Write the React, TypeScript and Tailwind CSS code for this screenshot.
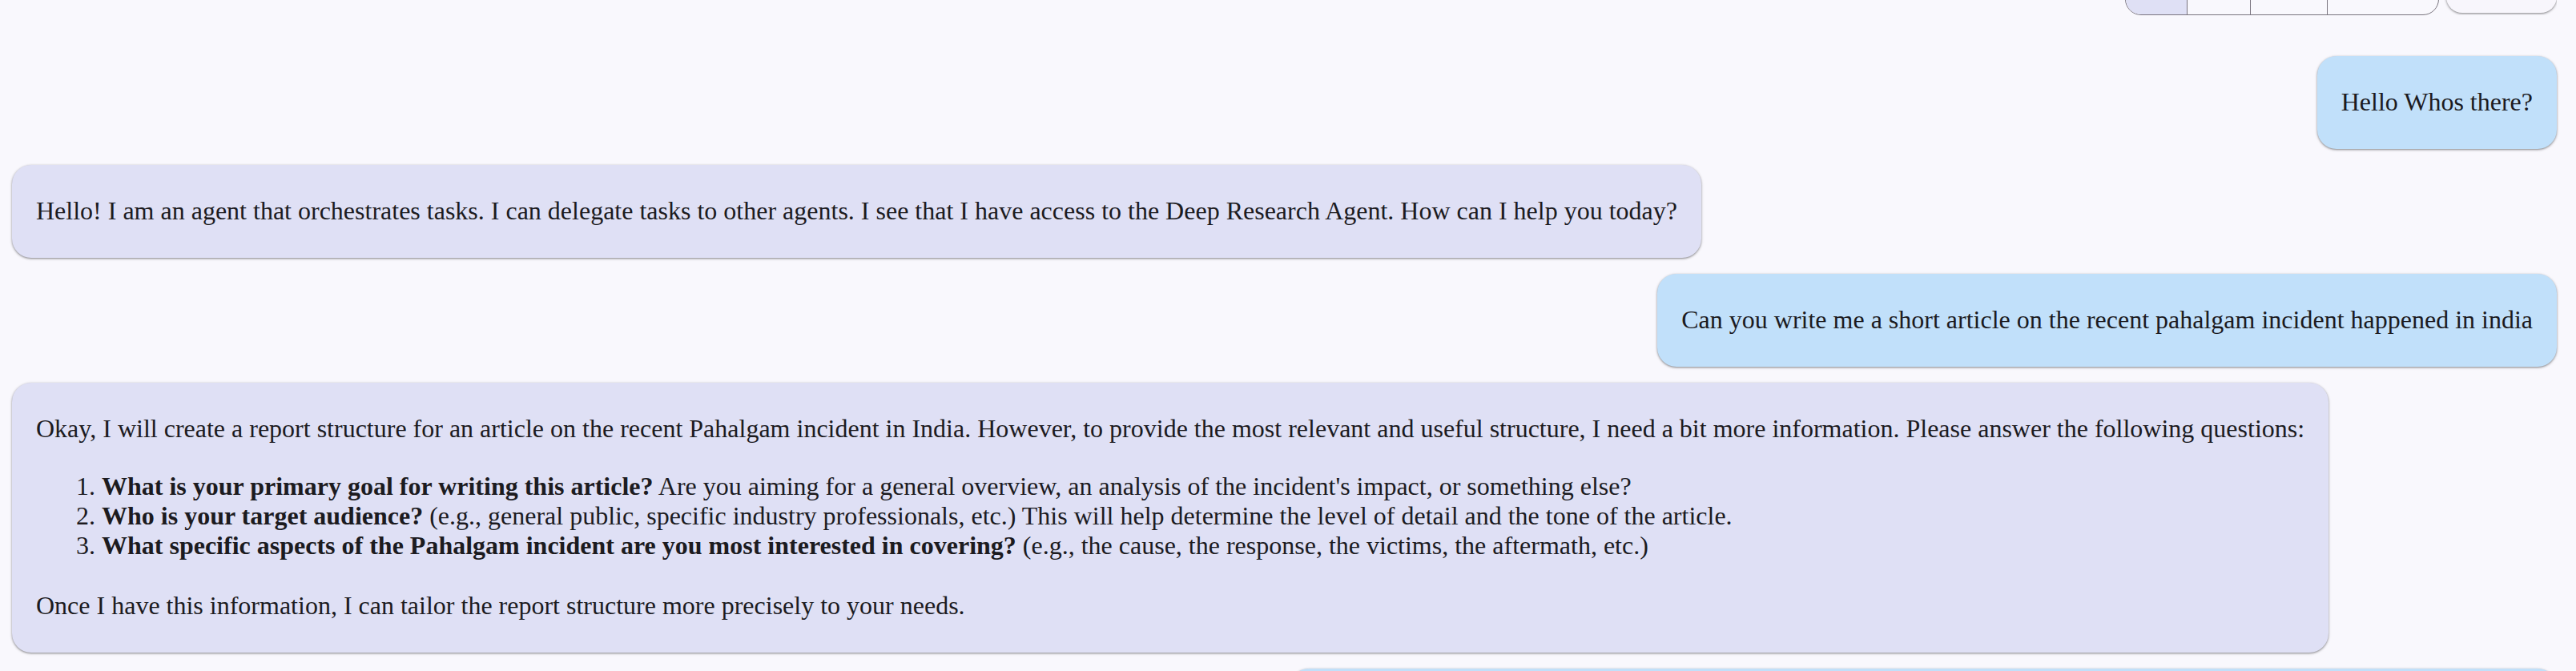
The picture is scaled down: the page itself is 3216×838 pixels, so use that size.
import React from "react";

const bubbleBase =
  "rounded-[24px] px-[30px] pt-[39px] pb-[40px] text-[32px] leading-[37px] text-[#1c1b1f] shadow-[0_1px_2px_rgba(0,0,0,0.3),0_1px_3px_1px_rgba(0,0,0,0.15)]";

function UserBubble({ children }: { children: React.ReactNode }) {
  return <div className={`${bubbleBase} self-end bg-[#c1e0fa]`}>{children}</div>;
}

function AgentBubble({ children }: { children: React.ReactNode }) {
  return <div className={`${bubbleBase} self-start bg-[#dfe0f5]`}>{children}</div>;
}

export default function App() {
  return (
    <div
      className="min-h-screen w-full overflow-hidden bg-[#f9f8fd] pl-[15px] pr-[24px]"
      style={{ fontFamily: '"Liberation Serif", "Times New Roman", serif' }}
    >
      {/* top controls, scrolled mostly out of view */}
      <div className="flex h-[19px] items-end justify-end gap-[9px] overflow-hidden">
        <div className="flex h-[40px] w-[392px] shrink-0 overflow-hidden rounded-full border border-[#79747e]">
          <div className="w-[77px] border-r border-[#79747e] bg-[#dfe0f5]" />
          <div className="w-[79px] border-r border-[#79747e]" />
          <div className="w-[96px] border-r border-[#79747e]" />
          <div className="flex-1" />
        </div>
        <div className="mb-[3px] h-[40px] w-[138px] shrink-0 rounded-full bg-[#f8f6fc] shadow-[0_1px_2px_rgba(0,0,0,0.3),0_1px_3px_1px_rgba(0,0,0,0.15)]" />
      </div>

      <div className="mt-[51px] flex flex-col gap-[20px]">
        <UserBubble>Hello Whos there?</UserBubble>
        <AgentBubble>
          Hello! I am an agent that orchestrates tasks. I can delegate tasks to other agents. I see that I have
          access to the Deep Research Agent. How can I help you today?
        </AgentBubble>
        <UserBubble>Can you write me a short article on the recent pahalgam incident happened in india</UserBubble>
        <AgentBubble>
          <p>
            Okay, I will create a report structure for an article on the recent Pahalgam incident in India.
            However, to provide the most relevant and useful structure, I need a bit more information. Please
            answer the following questions:
          </p>
          <div className="mt-[35px] pl-[50px]">
            <div>
              1. <b>What is your primary goal for writing this article?</b> Are you aiming for a general overview,
              an analysis of the incident&apos;s impact, or something else?
            </div>
            <div>
              2. <b>Who is your target audience?</b> (e.g., general public, specific industry professionals, etc.)
              This will help determine the level of detail and the tone of the article.
            </div>
            <div>
              3. <b>What specific aspects of the Pahalgam incident are you most interested in covering?</b> (e.g.,
              the cause, the response, the victims, the aftermath, etc.)
            </div>
          </div>
          <p className="mt-[38px]">
            Once I have this information, I can tailor the report structure more precisely to your needs.
          </p>
        </AgentBubble>
        <div className={`${bubbleBase} h-[116px] w-[1582px] self-end bg-[#c1e0fa]`} />
      </div>
    </div>
  );
}
